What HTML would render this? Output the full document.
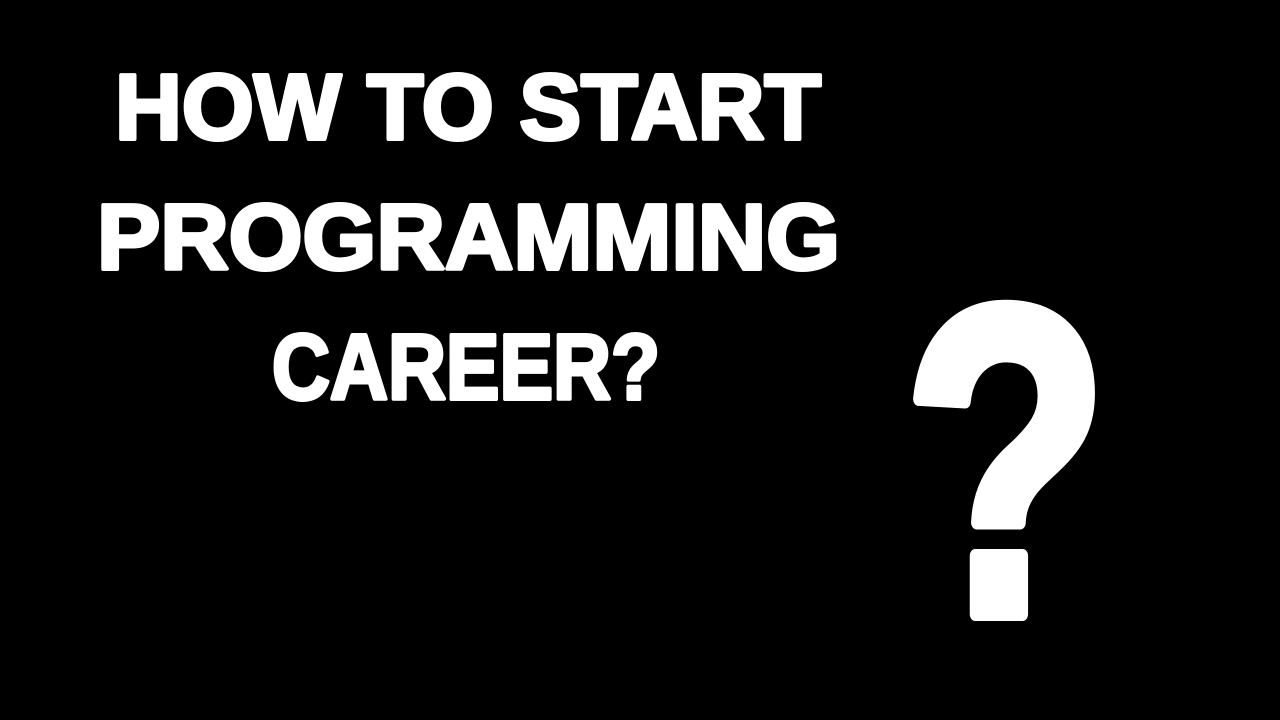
<!DOCTYPE html>
<html>
<head>
<meta charset="utf-8">
<style>
html,body{margin:0;padding:0;background:#000;width:1280px;height:720px;overflow:hidden}
svg{display:block}
text{font-family:"Liberation Sans",sans-serif;font-weight:bold;fill:#fff;stroke:#fff;stroke-linejoin:round}
</style>
</head>
<body>
<svg width="1280" height="720" viewBox="0 0 1280 720" xmlns="http://www.w3.org/2000/svg">
<rect width="1280" height="720" fill="#000"/>
<text x="115" y="139" font-size="93" stroke-width="4" textLength="706" lengthAdjust="spacingAndGlyphs">HOW TO START</text>
<text x="97" y="269" font-size="93" stroke-width="4" textLength="743" lengthAdjust="spacingAndGlyphs">PROGRAMMING</text>
<text x="272" y="399" font-size="93" stroke-width="4" textLength="388" lengthAdjust="spacingAndGlyphs">CAREER?</text>
<text x="903" y="614" font-size="440" stroke-width="14" textLength="206" lengthAdjust="spacingAndGlyphs">?</text>
</svg>
</body>
</html>
